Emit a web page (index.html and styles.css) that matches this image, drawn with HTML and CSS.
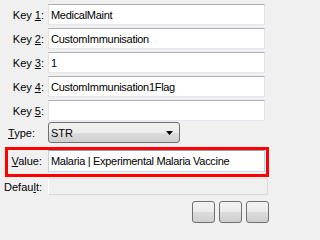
FILE: index.html
```html
<!DOCTYPE html>
<html>
<head>
<meta charset="utf-8">
<link rel="stylesheet" href="styles.css">
</head>
<body>
<div class="form">
  <div class="row"><label class="lbl">Key <u>1</u>:</label><div class="field">MedicalMaint</div></div>
  <div class="row"><label class="lbl">Key <u>2</u>:</label><div class="field">CustomImmunisation</div></div>
  <div class="row"><label class="lbl">Key <u>3</u>:</label><div class="field">1</div></div>
  <div class="row"><label class="lbl">Key <u>4</u>:</label><div class="field">CustomImmunisation1Flag</div></div>
  <div class="row"><label class="lbl">Key <u>5</u>:</label><div class="field"></div></div>
  <div class="row row-type"><label class="lbl lbl-type"><u>T</u>ype:</label>
    <div class="combo"><span>STR</span><svg class="arrow" width="7" height="4" viewBox="0 0 7 4"><path d="M0 0H7L3.5 4Z" fill="#000"/></svg></div>
  </div>
  <div class="highlight">
    <label class="lbl lbl-value"><u>V</u>alue:</label><div class="field field-value">Malaria | Experimental Malaria Vaccine</div>
  </div>
  <div class="row row-default"><label class="lbl lbl-default">Defau<u>l</u>t:</label><div class="field field-disabled"></div></div>
  <div class="buttons"><div class="btn"></div><div class="btn"></div><div class="btn"></div></div>
</div>
</body>
</html>
```
FILE: styles.css
```css
html, body {
  margin: 0;
  padding: 0;
  overflow: hidden;
  background: #f0f0f0;
}
body {
  font-family: "Liberation Sans", Arial, sans-serif;
  font-size: 11px;
  color: #000;
}
.form {
  display: flex;
  flex-direction: column;
  padding-top: 4px;
  width: 272px;
}
.row {
  display: flex;
  align-items: center;
  height: 21px;
  margin-bottom: 3px;
}
.lbl {
  width: 44px;
  text-align: right;
  margin-right: 4px;
  white-space: nowrap;
  flex: none;
}
.lbl u { text-decoration: underline; text-underline-offset: 1px; }
.lbl-type { width: 35px; margin-right: 13px; }
.field {
  box-sizing: border-box;
  width: 217px;
  height: 21px;
  background: #fff;
  border: 1px solid;
  border-color: #abadb3 #e2e3ea #e3e9ef #e2e3ea;
  padding: 0 2px;
  display: flex;
  align-items: center;
  letter-spacing: -0.3px;
  white-space: nowrap;
  overflow: hidden;
}
.row-type { margin-top: -2px; margin-bottom: 4px; }
.combo {
  box-sizing: border-box;
  width: 132px;
  height: 21px;
  border: 1px solid #707070;
  border-radius: 3px;
  background: linear-gradient(#f2f2f2 0%, #ebebeb 50%, #dddddd 50%, #cfcfcf 100%);
  display: flex;
  align-items: center;
  justify-content: space-between;
  padding: 0 6px 0 2px;
}
.arrow { display: block; }
.highlight {
  box-sizing: border-box;
  margin-left: 5px;
  width: 264px;
  height: 30px;
  border: 3px solid #ff0000;
  display: flex;
  align-items: flex-start;
}
.lbl-value {
  width: 34px;
  margin-right: 6px;
  height: 22px;
  line-height: 22px;
}
.field-value {
  height: 22px;
  border-color: #7da2ce #b7d5ea #c5dbef #b7d5ea;
}
.row-default { margin-top: 1px; height: 17px; margin-bottom: 0; }
.lbl-default { width: 42px; margin-right: 6px; }
.field-disabled {
  width: 220px;
  height: 17px;
  background: #f0f0f0;
  border-color: #e4e4e4 #dadada #dadada #ffffff;
}
.buttons {
  display: flex;
  justify-content: flex-end;
  gap: 4px;
  padding-right: 3px;
  margin-top: 6px;
}
.btn {
  box-sizing: border-box;
  width: 23px;
  height: 22px;
  border: 1px solid #707070;
  border-radius: 3px;
  background: linear-gradient(#f2f2f2 0%, #ebebeb 50%, #dddddd 50%, #cfcfcf 100%);
}
```
